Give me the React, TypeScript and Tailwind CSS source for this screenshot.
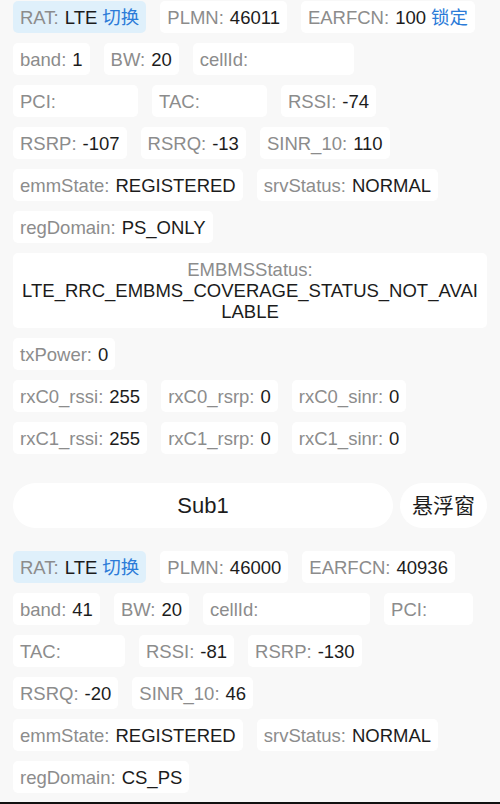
import React from 'react';

type Item = {
  label: string;
  value?: string;
  action?: string;
  blank?: string;
  active?: boolean;
};

const font = { fontFamily: '"Liberation Sans", "Noto Sans CJK SC", sans-serif' };

function Chip({ item }: { item: Item }) {
  return (
    <div
      className={`h-[32px] flex items-center px-[7px] rounded-[5px] whitespace-nowrap ${item.active ? 'bg-[#dff0fb]' : 'bg-white'} ${item.blank ?? ''}`}
    >
      <span className="text-[#8c8c8c]">{item.label}:</span>
      {item.value && <span className="text-[#1c1c1c] ml-[6px]">{item.value}</span>}
      {item.action && <span className="text-[#2b7bd8] ml-[5px]">{item.action}</span>}
    </div>
  );
}

function Row({ items }: { items: Item[] }) {
  return (
    <div className="flex gap-x-[14px]">
      {items.map((it) => (
        <Chip key={it.label} item={it} />
      ))}
    </div>
  );
}

const sub0: Item[][] = [
  [
    { label: 'RAT', value: 'LTE', action: '切换', active: true },
    { label: 'PLMN', value: '46011' },
    { label: 'EARFCN', value: '100', action: '锁定' },
  ],
  [
    { label: 'band', value: '1' },
    { label: 'BW', value: '20' },
    { label: 'cellId', blank: 'w-[161px]' },
  ],
  [
    { label: 'PCI', blank: 'w-[125px]' },
    { label: 'TAC', blank: 'w-[115px]' },
    { label: 'RSSI', value: '-74' },
  ],
  [
    { label: 'RSRP', value: '-107' },
    { label: 'RSRQ', value: '-13' },
    { label: 'SINR_10', value: '110' },
  ],
  [
    { label: 'emmState', value: 'REGISTERED' },
    { label: 'srvStatus', value: 'NORMAL' },
  ],
  [{ label: 'regDomain', value: 'PS_ONLY' }],
];

const sub0Tail: Item[][] = [
  [{ label: 'txPower', value: '0' }],
  [
    { label: 'rxC0_rssi', value: '255' },
    { label: 'rxC0_rsrp', value: '0' },
    { label: 'rxC0_sinr', value: '0' },
  ],
  [
    { label: 'rxC1_rssi', value: '255' },
    { label: 'rxC1_rsrp', value: '0' },
    { label: 'rxC1_sinr', value: '0' },
  ],
];

const sub1: Item[][] = [
  [
    { label: 'RAT', value: 'LTE', action: '切换', active: true },
    { label: 'PLMN', value: '46000' },
    { label: 'EARFCN', value: '40936' },
  ],
  [
    { label: 'band', value: '41' },
    { label: 'BW', value: '20' },
    { label: 'cellId', blank: 'w-[167px]' },
    { label: 'PCI', blank: 'w-[89px]' },
  ],
  [
    { label: 'TAC', blank: 'w-[112px]' },
    { label: 'RSSI', value: '-81' },
    { label: 'RSRP', value: '-130' },
  ],
  [
    { label: 'RSRQ', value: '-20' },
    { label: 'SINR_10', value: '46' },
  ],
  [
    { label: 'emmState', value: 'REGISTERED' },
    { label: 'srvStatus', value: 'NORMAL' },
  ],
  [{ label: 'regDomain', value: 'CS_PS' }],
];

export default function App() {
  return (
    <div
      className="h-[804px] overflow-hidden bg-[#f8f8f8] text-[18.5px] leading-[21px] border-b-2 border-[#111]"
      style={font}
    >
      <div className="px-[13px] pt-[1px] flex flex-col gap-y-[10px]">
        {sub0.map((r, i) => (
          <Row key={i} items={r} />
        ))}
        <div className="bg-white rounded-[5px] px-[7px] py-[6px] text-center break-all leading-[21px]">
          <div className="text-[#8c8c8c]">EMBMSStatus:</div>
          <div className="text-[#1c1c1c]">LTE_RRC_EMBMS_COVERAGE_STATUS_NOT_AVAILABLE</div>
        </div>
        {sub0Tail.map((r, i) => (
          <Row key={i} items={r} />
        ))}
      </div>

      <div className="px-[13px] mt-[29px] flex gap-x-[7px]">
        <div className="flex-1 h-[45px] rounded-full bg-white flex items-center justify-center text-[22px] text-[#1c1c1c]">
          Sub1
        </div>
        <div className="w-[87px] h-[45px] rounded-full bg-white flex items-center justify-center text-[21px] text-[#1c1c1c]">
          悬浮窗
        </div>
      </div>

      <div className="px-[13px] mt-[23px] flex flex-col gap-y-[10px]">
        {sub1.map((r, i) => (
          <Row key={i} items={r} />
        ))}
      </div>
    </div>
  );
}
